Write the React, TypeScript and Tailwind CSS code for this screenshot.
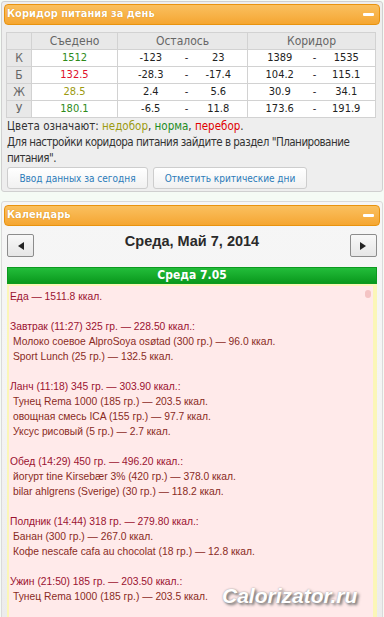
import React from 'react';

const F = '[font-family:DejaVu_Sans_Condensed,DejaVu_Sans,sans-serif]';

const Minus: React.FC = () => (
    <span className="ml-auto mr-[3px] block w-[11px] h-[3px] rounded-[1px] bg-white" />
);

const PanelHeader: React.FC<{ title: string }> = ({ title }) => (
    <div className="flex items-center h-[21px] rounded-[4px] border border-[#e8930f] bg-gradient-to-b from-[#fac05e] to-[#f5a630] px-[2px] text-white font-bold text-[11px] [text-shadow:0_0_1px_#c77800]">
        <span>{title}</span>
        <Minus />
    </div>
);

const rows = [
    { l: 'К', eat: '1512', c: 'text-[#2e8b1a]', a: '-123', b: '23', k1: '1389', k2: '1535' },
    { l: 'Б', eat: '132.5', c: 'text-[#e0102a]', a: '-28.3', b: '-17.4', k1: '104.2', k2: '115.1' },
    { l: 'Ж', eat: '28.5', c: 'text-[#9c9a10]', a: '2.4', b: '5.6', k1: '30.9', k2: '34.1' },
    { l: 'У', eat: '180.1', c: 'text-[#2e8b1a]', a: '-6.5', b: '11.8', k1: '173.6', k2: '191.9' },
];

const Corridor: React.FC = () => (
    <table className="mt-[7px] ml-[2px] border-collapse text-[11px] leading-[14px] text-[#222] table-fixed w-[369px]">
        <colgroup>
            <col className="w-[25px]" />
            <col className="w-[86px]" />
            <col className="w-[66px]" />
            <col className="w-[6px]" />
            <col className="w-[58px]" />
            <col className="w-[64px]" />
            <col className="w-[6px]" />
            <col className="w-[58px]" />
        </colgroup>
        <thead>
            <tr className="h-[17px] bg-[#e8e8e8] text-[#666] text-[12px] leading-[15px]">
                <th className="p-0 border border-[#d2d2d2] font-normal"></th>
                <th className="p-0 border border-[#d2d2d2] font-normal">Съедено</th>
                <th colSpan={3} className="p-0 border border-[#d2d2d2] font-normal">Осталось</th>
                <th colSpan={3} className="p-0 border border-[#d2d2d2] font-normal">Коридор</th>
            </tr>
        </thead>
        <tbody>
            {rows.map(r => (
                <tr key={r.l} className="h-[17px] bg-white text-center">
                    <td className="p-0 border border-[#d2d2d2] bg-[#e8e8e8] text-[#666] text-[12px]">{r.l}</td>
                    <td className={`p-0 border border-[#d2d2d2] ${r.c}`}>{r.eat}</td>
                    <td className="p-0 border-y border-l border-[#d2d2d2]">{r.a}</td>
                    <td className="p-0 border-y border-[#d2d2d2]">-</td>
                    <td className="p-0 border-y border-r border-[#d2d2d2]">{r.b}</td>
                    <td className="p-0 border-y border-l border-[#d2d2d2]">{r.k1}</td>
                    <td className="p-0 border-y border-[#d2d2d2]">-</td>
                    <td className="p-0 border-y border-r border-[#d2d2d2]">{r.k2}</td>
                </tr>
            ))}
        </tbody>
    </table>
);

const Btn: React.FC<{ children: React.ReactNode; w: string }> = ({ children, w }) => (
    <button className={`${w} h-[22px] rounded-[3px] border border-[#cdcdcd] bg-gradient-to-b from-white to-[#f1f1f1] text-[10px] text-[#2b7bb9]`}>
        {children}
    </button>
);

const meals: { t: string; items: string[] }[] = [
    { t: 'Завтрак (11:27) 325 гр. — 228.50 ккал.:', items: ['Молоко соевое AlproSoya osøtad (300 гр.) — 96.0 ккал.', 'Sport Lunch (25 гр.) — 132.5 ккал.'] },
    { t: 'Ланч (11:18) 345 гр. — 303.90 ккал.:', items: ['Тунец Rema 1000 (185 гр.) — 203.5 ккал.', 'овощная смесь ICA (155 гр.) — 97.7 ккал.', 'Уксус рисовый (5 гр.) — 2.7 ккал.'] },
    { t: 'Обед (14:29) 450 гр. — 496.20 ккал.:', items: ['йогурт tine Kirsebær 3% (420 гр.) — 378.0 ккал.', 'bilar ahlgrens (Sverige) (30 гр.) — 118.2 ккал.'] },
    { t: 'Полдник (14:44) 318 гр. — 279.80 ккал.:', items: ['Банан (300 гр.) — 267.0 ккал.', 'Кофе nescafe cafa au chocolat (18 гр.) — 12.8 ккал.'] },
    { t: 'Ужин (21:50) 185 гр. — 203.50 ккал.:', items: ['Тунец Rema 1000 (185 гр.) — 203.5 ккал.'] },
];

const NavBtn: React.FC<{ dir: 'l' | 'r' }> = ({ dir }) => (
    <button className="w-[27px] h-[23px] flex items-center justify-center rounded-[2px] border border-[#8c8c8c] bg-gradient-to-b from-[#f8f8f8] to-[#e6e6e6]">
        {dir === 'l'
            ? <span className="w-0 h-0 border-y-[4px] border-y-transparent border-r-[6px] border-r-[#222]" />
            : <span className="w-0 h-0 border-y-[4px] border-y-transparent border-l-[6px] border-l-[#222]" />}
    </button>
);

export default function App() {
    return (
        <div className={`relative w-[384px] h-[617px] overflow-hidden bg-[#f5fbf5] ${F}`}>
            {/* Коридор питания */}
            <div className="mx-[1px] mt-[1px] rounded-[3px] border border-[#d0d0d0] bg-[#eeeeee] px-[2px] pt-[2px] pb-[2px]">
                <PanelHeader title="Коридор питания за день" />
                <Corridor />
                <div className="pl-[3px] text-[11.5px] leading-[16px] text-[#333]">
                    <p>Цвета означают: <span className="text-[#9c9a10]">недобор</span>, <span className="text-[#1e8c1e]">норма</span>, <span className="text-[#e00000]">перебор</span>.</p>
                    <p className="tracking-[-0.5px]">Для настройки коридора питания зайдите в раздел "Планирование питания".</p>
                </div>
                <div className="flex gap-[5px] pl-[3px] mt-[1px]">
                    <Btn w="w-[141px]">Ввод данных за сегодня</Btn>
                    <Btn w="w-[154px]">Отметить критические дни</Btn>
                </div>
            </div>

            {/* Календарь */}
            <div className="mx-[1px] mt-[9px] rounded-t-[3px] border border-[#dadada] bg-gradient-to-b from-[#f6f6f6] via-[#f4f4f4] to-[#ececec] px-[2px] pt-[3px] h-[420px]">
                <PanelHeader title="Календарь" />
                <div className="flex items-center justify-between mt-[8px] px-[3px]">
                    <NavBtn dir="l" />
                    <span className="[font-family:Liberation_Sans,Arial,sans-serif] font-bold text-[14.5px] text-[#2a2a2a] -mt-[7px]">Среда, Май 7, 2014</span>
                    <NavBtn dir="r" />
                </div>
                <div className="mt-[10px] mx-[3px]">
                    <div className="h-[17px] border border-[#0d9a20] bg-gradient-to-b from-[#22bd3a] to-[#08991c] text-center text-white font-bold text-[12px] leading-[15px]">Среда 7.05</div>
                    <div className="relative border-l-[2px] border-r-[4px] border-t-[2px] border-[#fbf6b8] bg-[#ffeaea] pt-[3px] pb-[20px] [font-family:Liberation_Sans,Arial,sans-serif] text-[10.3px] leading-[15px] text-[#9b1230]">
                        <span className="absolute right-[2px] top-[4px] w-[6px] h-[8px] rounded-full bg-[#f4c4c4]" />
                        <p className="pl-[1px] whitespace-nowrap">Еда — 1511.8 ккал.</p>
                        {meals.map(m => (
                            <div key={m.t}>
                                <p className="h-[15px]" />
                                <p className="pl-[1px] whitespace-nowrap">{m.t}</p>
                                {m.items.map(i => (
                                    <p key={i} className="pl-[4px] whitespace-nowrap text-[#8a2a1e]">{i}</p>
                                ))}
                            </div>
                        ))}
                    </div>
                </div>
            </div>

            <span className="absolute left-[222px] top-[580px] [font-family:Liberation_Sans,Arial,sans-serif] italic font-bold text-[21px] text-white [text-shadow:2px_2px_3px_#6f6f6f,0_0_2px_#9a9a9a]">Calorizator.ru</span>
        </div>
    );
}
